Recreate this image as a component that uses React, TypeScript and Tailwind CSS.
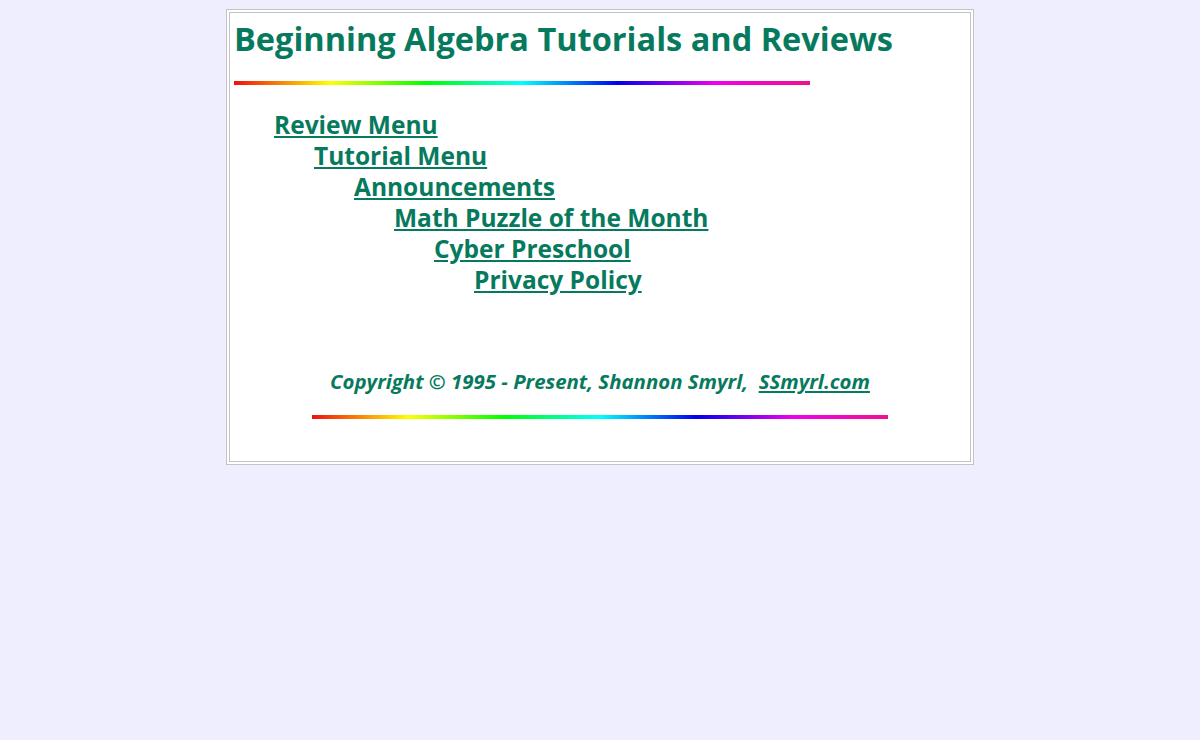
const links = [
  'Review Menu',
  'Tutorial Menu',
  'Announcements',
  'Math Puzzle of the Month',
  'Cyber Preschool',
  'Privacy Policy',
]

const indents = ['pl-[40px]', 'pl-[80px]', 'pl-[120px]', 'pl-[160px]', 'pl-[200px]', 'pl-[240px]']

function Rainbow() {
  return (
    <div className="h-[4px] w-[576px] bg-[linear-gradient(to_right,#f01010,#ffff00,#00ff00,#00ffff,#0000ee,#ee00ee,#f0108f)]" />
  )
}

export default function App() {
  return (
    <div className="min-h-screen bg-[#eeeeff] pt-[9px] font-['Open_Sans',sans-serif] text-[#077a5e]">
      <div className="mx-auto w-[748px] border border-[#c4c4c4] bg-white p-[2px]">
        <div className="border border-[#c4c4c4] px-[4px] pt-[4px] pb-[42px]">
          <h1 className="text-[32.5px] leading-[44px] font-bold">Beginning Algebra Tutorials and Reviews</h1>
          <div className="mt-[20px]">
            <Rainbow />
          </div>
          <div className="mt-[24px] flex flex-col">
            {links.map((l, i) => (
              <div key={l} className={`${indents[i]} text-[24.5px] leading-[31px] font-bold`}>
                <a href="#" className="underline">
                  {l}
                </a>
              </div>
            ))}
          </div>
          <p className="mt-[73px] text-center text-[20.4px] leading-[26px] font-bold italic">
            Copyright © 1995 - Present, Shannon Smyrl,&nbsp;{' '}
            <a href="#" className="underline">
              SSmyrl.com
            </a>
          </p>
          <div className="mt-[21px] flex justify-center">
            <Rainbow />
          </div>
        </div>
      </div>
    </div>
  )
}
